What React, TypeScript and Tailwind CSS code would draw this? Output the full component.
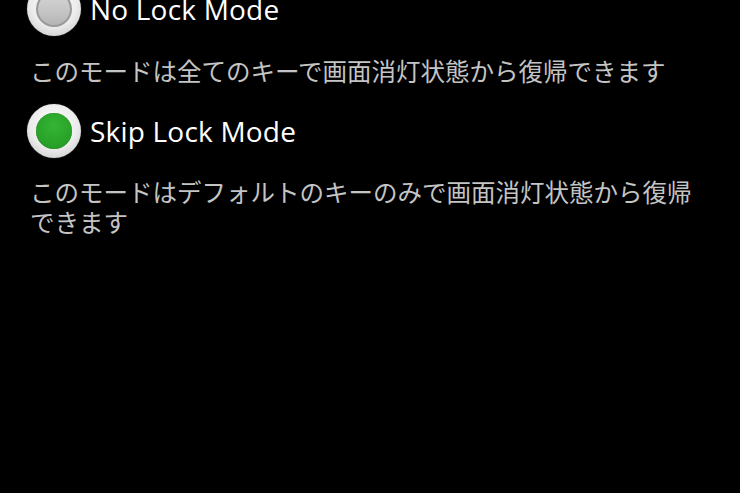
import React from "react";

function Radio({ checked }: { checked: boolean }) {
  return (
    <div className="w-[54px] h-[54px] shrink-0 rounded-full bg-[radial-gradient(circle_at_50%_40%,#ffffff_0%,#ececec_55%,#bdbdbd_100%)] flex items-center justify-center shadow-[0_0_1px_#888]">
      {checked ? (
        <div className="w-[36px] h-[36px] rounded-full bg-[radial-gradient(circle_at_50%_35%,#34b534_0%,#27a027_70%,#1e8a1e_100%)] shadow-[inset_0_0_1px_#176e17]" />
      ) : (
        <div className="w-[36px] h-[36px] rounded-full border-[2px] border-[#9a9a9a] bg-[linear-gradient(180deg,#d6d6d6_0%,#c4c4c4_60%,#b5b5b5_100%)]" />
      )}
    </div>
  );
}

export default function App() {
  const title = "text-white text-[28px] leading-[34px] tracking-[0.2px]";
  const desc = "text-[#c4c4c4] text-[24.5px] leading-[30px] pl-[3px] pr-[35px]";
  return (
    <div
      className="w-[740px] h-[493px] bg-black overflow-hidden"
      style={{ fontFamily: '"Open Sans", "Noto Sans CJK JP", sans-serif' }}
    >
      <div className="-mt-[18px] pl-[27px] flex flex-col">
        <div className="flex items-center gap-[9px] h-[54px]">
          <Radio checked={false} />
          <span className={title}>No Lock Mode</span>
        </div>
        <div className={desc + " mt-[21px]"}>
          このモードは全てのキーで画面消灯状態から復帰できます
        </div>
        <div className="flex items-center gap-[9px] h-[54px] mt-[17px]">
          <Radio checked={true} />
          <span className={title}>Skip Lock Mode</span>
        </div>
        <div className={desc + " mt-[20px]"}>
          このモードはデフォルトのキーのみで画面消灯状態から復帰できます
        </div>
      </div>
    </div>
  );
}
